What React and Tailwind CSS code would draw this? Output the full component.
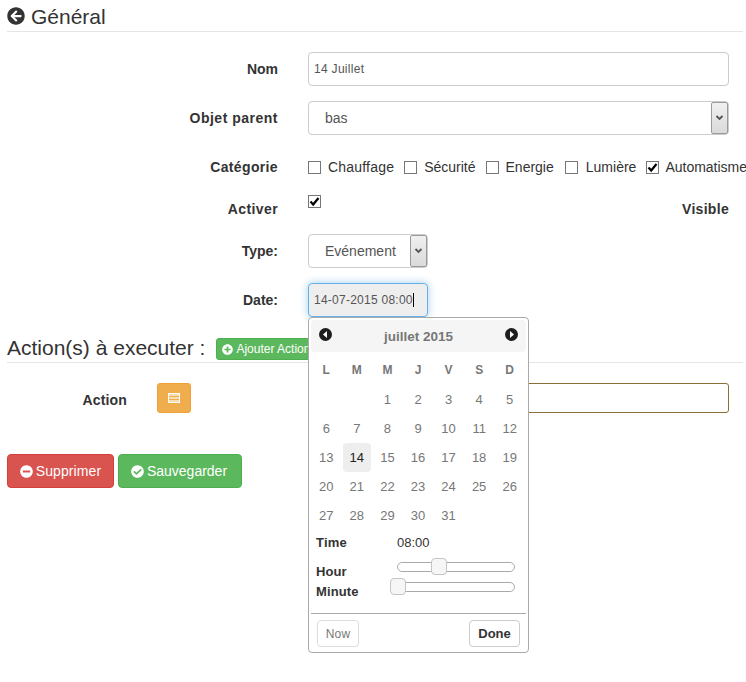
import React from "react";
import { FaArrowCircleLeft, FaPlusCircle, FaMinusCircle, FaCheckCircle } from "react-icons/fa";

const Box = ({ checked }) => (
  <span className="w-[13px] h-[13px] border border-[#767676] bg-white inline-flex items-center justify-center shrink-0">
    {checked && (
      <svg width="11" height="11" viewBox="0 0 11 11"><path d="M1.5 5.5 L4.2 8.5 L9.5 2" fill="none" stroke="#000" strokeWidth="2.2" /></svg>
    )}
  </span>
);

const Label = ({ children, className = "" }) => (
  <div className={"w-[271px] shrink-0 text-right font-bold text-[14px] leading-[20px] text-[#333] " + className}>{children}</div>
);

const SelectArrow = () => (
  <span className="absolute right-0 top-0 bottom-0 w-[17px] bg-gradient-to-b from-[#f0f0f0] to-[#dadada] border border-[#9a9a9a] rounded-[2px] flex items-center justify-center">
    <svg width="9" height="6" viewBox="0 0 9 6"><path d="M1.5 1 L4.5 4 L7.5 1" fill="none" stroke="#555" strokeWidth="1.8" /></svg>
  </span>
);

const Round = ({ dir }) => (
  <svg width="13" height="13" viewBox="0 0 13 13">
    <circle cx="6.5" cy="6.5" r="6.5" fill="#1d1d1d" />
    <path d={dir === "l" ? "M8 3 L4 6.5 L8 10 Z" : "M5 3 L9 6.5 L5 10 Z"} fill="#fff" />
  </svg>
);

const days = ["", "", 1, 2, 3, 4, 5, 6, 7, 8, 9, 10, 11, 12, 13, 14, 15, 16, 17, 18, 19, 20, 21, 22, 23, 24, 25, 26, 27, 28, 29, 30, 31, "", ""];

const Picker = () => (
  <div className="absolute left-0 top-[34px] w-[221px] h-[336px] bg-white border border-[#aaa] rounded-[4px] p-[2px] z-10 text-[#333]">
    <div className="h-[32px] bg-[#f5f5f5] rounded-[4px] flex items-center justify-between px-[8px] relative">
      <span className="-mt-[4px] flex"><Round dir="l" /></span>
      <span className="font-bold text-[13.5px] text-[#777] pt-[2px]">juillet 2015</span>
      <span className="-mt-[4px] flex"><Round dir="r" /></span>
    </div>
    <div className="grid grid-cols-7 w-[214px] mt-[2px]">
      {["L", "M", "M", "J", "V", "S", "D"].map((d, i) => (
        <div key={i} className="h-[31px] flex items-center justify-center font-bold text-[12px] text-[#777]">{d}</div>
      ))}
    </div>
    <div className="grid grid-cols-7 w-[214px] auto-rows-[29px]">
      {days.map((d, i) => (
        <div key={i} className={"flex items-center justify-center text-[13px] rounded-[4px] " + (d === 14 ? "bg-[#eeeeee] text-[#222] mx-[1px]" : "text-[#777]")}>{d}</div>
      ))}
    </div>
    <div className="flex items-center h-[20px] mt-[3px] pl-[5px] text-[13px] leading-[18px]">
      <span className="w-[81px] font-bold tracking-[0.2px]">Time</span>
      <span>08:00</span>
    </div>
    <div className="flex pl-[5px] mt-[9px] text-[13px] leading-[20px] font-bold tracking-[0.1px]">
      <div className="w-[81px]">
        <div>Hour</div>
        <div>Minute</div>
      </div>
      <div className="w-[118px]">
        <div className="relative h-[10px] border border-[#aaa] rounded-[5px]">
          <span className="absolute left-[33px] -top-[5px] w-[16px] h-[17px] bg-[#f6f6f6] border border-[#c5c5c5] rounded-[4px]" />
        </div>
        <div className="relative h-[10px] mt-[10px] border border-[#aaa] rounded-[5px]">
          <span className="absolute -left-[8px] -top-[5px] w-[16px] h-[17px] bg-[#f6f6f6] border border-[#c5c5c5] rounded-[4px]" />
        </div>
      </div>
    </div>
    <div className="border-t border-[#aaa] mt-[11px] pt-[6px] pl-[6px] pr-[6px] flex justify-between">
      <span className="h-[27px] w-[42px] border border-[#ddd] rounded-[4px] flex items-center justify-center text-[12px] tracking-[0.1px] text-[#777]">Now</span>
      <span className="h-[27px] w-[51px] border border-[#ccc] rounded-[4px] flex items-center justify-center text-[13px] font-bold text-[#333]">Done</span>
    </div>
  </div>
);

export default function App() {
  return (
    <div className="w-[746px] h-[682px] overflow-hidden bg-white text-[#333] px-[7px] font-['Liberation_Sans',Arial,sans-serif]">
      <div className="h-[32px] border-b border-[#e5e5e5] flex items-center gap-[6px] text-[21px] w-[736px]">
        <FaArrowCircleLeft className="text-[18px] text-[#333]" />
        <span className="mt-[2px]">Général</span>
      </div>

      <div className="flex items-center gap-[30px] mt-[20px] h-[34px]">
        <Label>Nom</Label>
        <div className="w-[421px] h-[34px] border border-[#ccc] rounded-[4px] flex items-center px-[5px] text-[12px] tracking-[0.3px] text-[#555]">14 Juillet</div>
      </div>

      <div className="flex items-center gap-[30px] mt-[15px] h-[34px]">
        <Label className="tracking-[0.5px]">Objet parent</Label>
        <div className="relative w-[421px] h-[34px] border border-[#ccc] rounded-[4px] flex items-center pl-[16px] text-[14px] text-[#555]">
          bas
          <SelectArrow />
        </div>
      </div>

      <div className="flex items-center gap-[30px] mt-[15px] h-[34px] w-[800px]">
        <Label className="tracking-[0.35px]">Catégorie</Label>
        <div className="flex items-center text-[14px] text-[#333] whitespace-nowrap">
          <Box /><span className="ml-[7px] mr-[10px] tracking-[0.2px]">Chauffage</span>
          <Box /><span className="ml-[7px] mr-[10px]">Sécurité</span>
          <Box /><span className="ml-[7px] mr-[11px]">Energie</span>
          <Box /><span className="ml-[8px] mr-[10px]">Lumière</span>
          <Box checked /><span className="ml-[6px]">Automatisme</span>
        </div>
      </div>

      <div className="flex gap-[30px] mt-[9px] h-[34px] w-[722px]">
        <div className="pt-[6px]"><Label className="tracking-[0.4px]">Activer</Label></div>
        <div className="flex-1 flex justify-between">
          <span className="flex pt-[2px] h-[15px]"><Box checked /></span>
          <span className="pt-[6px] font-bold text-[14px] leading-[20px] tracking-[0.3px]">Visible</span>
        </div>
      </div>

      <div className="flex items-center gap-[30px] mt-[7px] h-[34px]">
        <Label>Type:</Label>
        <div className="relative w-[120px] h-[34px] border border-[#ccc] rounded-[4px] flex items-center pl-[16px] text-[14px] text-[#555]">
          Evénement
          <SelectArrow />
        </div>
      </div>

      <div className="flex items-center gap-[30px] mt-[15px] h-[34px]">
        <Label>Date:</Label>
        <div className="relative w-[120px] h-[34px]">
          <div className="w-[120px] h-[34px] border border-[#66afe9] rounded-[4px] bg-[#eeeeee] shadow-[0_0_8px_rgba(102,175,233,0.6)] flex items-center px-[5px] text-[12px] tracking-[0.25px] text-[#555] whitespace-nowrap">
            14-07-2015 08:00<span className="w-px h-[14px] bg-black" />
          </div>
          <Picker />
        </div>
      </div>

      <div className="flex items-center mt-[16px] h-[30px] border-b border-[#e5e5e5] w-[736px]">
        <span className="text-[21px] leading-[30px]">Action(s) à executer :</span>
        <span className="ml-[11px] mt-[3px] h-[22px] w-[94px] shrink-0 bg-[#5cb85c] border border-[#4cae4c] rounded-[3px] flex items-center pl-[5px] gap-[3px] text-[12px] text-white whitespace-nowrap overflow-hidden">
          <FaPlusCircle className="text-[11px] shrink-0" />Ajouter Action
        </span>
      </div>

      <div className="flex items-start mt-[20px] h-[30px]">
        <div className="w-[120px] text-right font-bold text-[14px] leading-[20px] pt-[7px] tracking-[0.15px]">Action</div>
        <div className="ml-[30px] w-[34px] h-[30px] bg-[#f0ad4e] border border-[#eea236] rounded-[3px] flex items-center justify-center">
          <svg width="12" height="10" viewBox="0 0 12 10">
            <rect x="0.5" y="0.5" width="11" height="9" fill="#f9dcb0" stroke="#fff" />
            <rect x="1" y="3" width="10" height="1" fill="#f0ad4e" />
            <rect x="1" y="6" width="10" height="1" fill="#f0ad4e" />
          </svg>
        </div>
        <div className="ml-[209px] w-[329px] h-[30px] border border-[#8a6d3b] rounded-[3px]" />
      </div>

      <div className="flex gap-[4px] mt-[41px]">
        <span className="h-[34px] w-[107px] bg-[#d9534f] border border-[#d43f3a] rounded-[4px] flex items-center justify-center gap-[3px] text-[14px] tracking-[0.1px] text-white">
          <FaMinusCircle className="text-[13px]" />Supprimer
        </span>
        <span className="h-[34px] w-[124px] bg-[#5cb85c] border border-[#4cae4c] rounded-[4px] flex items-center justify-center gap-[3px] pr-[2px] text-[14px] text-white">
          <FaCheckCircle className="text-[13px]" />Sauvegarder
        </span>
      </div>
    </div>
  );
}
